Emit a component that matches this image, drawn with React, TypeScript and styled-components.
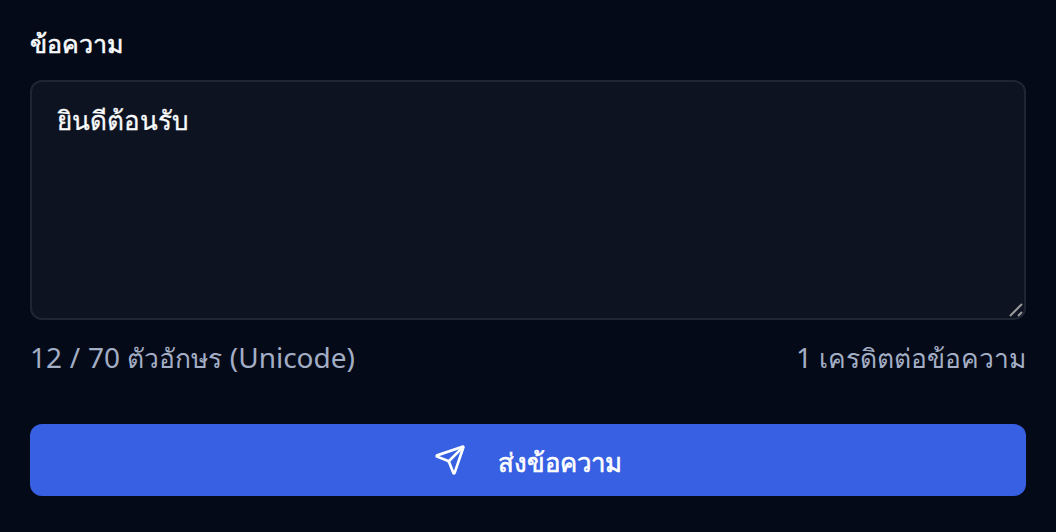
import React from "react";
import styled, { createGlobalStyle } from "styled-components";

const Global = createGlobalStyle`
  html, body { margin: 0; padding: 0; background: #040a18; }
  body { font-family: "Noto Sans", "Inter", sans-serif; }
`;

const Page = styled.div`
  box-sizing: border-box;
  width: 1056px;
  height: 532px;
  padding: 23px 30px 36px;
  display: flex;
  flex-direction: column;
  background: #040a18;
`;

const Label = styled.label`
  display: block;
  height: 41px;
  line-height: 41px;
  font-size: 25px;
  font-weight: 400;
  -webkit-text-stroke: 0.6px #f8fafc;
  color: #f8fafc;
  margin-bottom: 16px;
`;

const InputWrap = styled.div`
  position: relative;
  width: 996px;
  height: 240px;
`;

const MessageInput = styled.textarea`
  box-sizing: border-box;
  display: block;
  width: 100%;
  height: 100%;
  padding: 20px 25px;
  border: 2px solid #1f2533;
  border-radius: 12px;
  background: #0e1322;
  color: #f8fafc;
  font-family: inherit;
  font-size: 26px;
  font-weight: 400;
  -webkit-text-stroke: 0.3px #f8fafc;
  line-height: 36px;
  outline: none;
  resize: none;
`;

const ResizeGrip = styled.svg`
  position: absolute;
  right: 2px;
  bottom: 2px;
  width: 16px;
  height: 16px;
  pointer-events: none;
`;

const Meta = styled.div`
  display: flex;
  justify-content: space-between;
  align-items: center;
  height: 40px;
  margin-top: 19px;
  font-size: 26.4px;
  color: #a3aec5;
`;

const Count = styled.span`
  word-spacing: 0.5px;
`;

const Latin = styled.span`
  font-size: 28px;
`;

const SendButton = styled.button`
  display: flex;
  align-items: center;
  justify-content: center;
  gap: 32px;
  width: 996px;
  height: 72px;
  margin-top: 45px;
  border: 0;
  border-radius: 12px;
  background: #3760e3;
  color: #fff;
  font-family: inherit;
  font-size: 25.8px;
  font-weight: 400;
`;

const SendLabel = styled.span`
  padding-top: 5px;
  -webkit-text-stroke: 0.6px #fff;
`;

export default function App() {
  return (
    <Page>
      <Global />
      <Label htmlFor="msg">ข้อความ</Label>
      <InputWrap>
        <MessageInput id="msg" defaultValue="ยินดีต้อนรับ" />
        <ResizeGrip viewBox="0 0 16 16" fill="none" stroke="#9a9a9a" strokeWidth="2">
          <path d="M2 14 14 2" />
          <path d="M10 14 14 10" />
        </ResizeGrip>
      </InputWrap>
      <Meta>
        <Count><Latin>12 / 70</Latin> ตัวอักษร <Latin>(Unicode)</Latin></Count>
        <span><Latin>1</Latin> เครดิตต่อข้อความ</span>
      </Meta>
      <SendButton>
        <svg width="32" height="32" viewBox="0 0 24 24" fill="none" stroke="currentColor" strokeWidth="2" strokeLinecap="round" strokeLinejoin="round">
          <path d="M14.536 21.686a.5.5 0 0 0 .937-.024l6.5-19a.496.496 0 0 0-.635-.635l-19 6.5a.5.5 0 0 0-.024.937l7.93 3.18a2 2 0 0 1 1.112 1.11z" />
          <path d="m21.854 2.147-10.94 10.939" />
        </svg>
        <SendLabel>ส่งข้อความ</SendLabel>
      </SendButton>
    </Page>
  );
}
